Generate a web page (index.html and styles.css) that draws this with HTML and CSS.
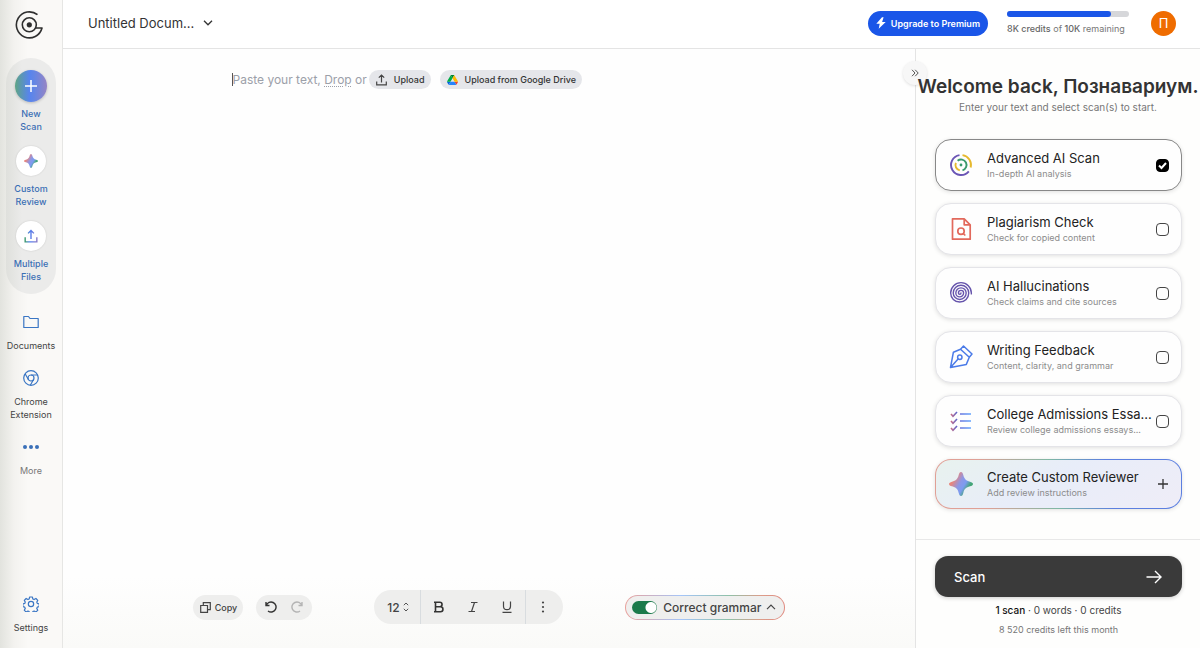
FILE: index.html
```
<!DOCTYPE html>
<html lang="en">
<head>
  <meta charset="UTF-8">
  <meta name="viewport" content="width=device-width, initial-scale=1">
  <title>Untitled Document</title>
  <link rel="stylesheet" href="styles.css">
</head>
<body>

  <!-- shared gradients for the icons -->
  <svg class="defs" width="0" height="0" aria-hidden="true">
    <defs>
      <linearGradient id="starBase" x1="0" y1="0.2" x2="1" y2="0.8">
        <stop offset="0.2" stop-color="#e8857c"/>
        <stop offset="0.45" stop-color="#8c97e6"/>
        <stop offset="0.62" stop-color="#7c9cf0"/>
        <stop offset="0.8" stop-color="#43a576"/>
      </linearGradient>
      <linearGradient id="uploadLine" gradientUnits="userSpaceOnUse" x1="2" y1="0" x2="22" y2="0">
        <stop offset="0" stop-color="#3d9a6c"/>
        <stop offset="0.4" stop-color="#4f7cf0"/>
        <stop offset="1" stop-color="#8a7cc8"/>
      </linearGradient>
      <linearGradient id="checkLine" gradientUnits="userSpaceOnUse" x1="1" y1="0" x2="9" y2="0">
        <stop offset="0" stop-color="#d9707c"/>
        <stop offset="1" stop-color="#4a63d8"/>
      </linearGradient>
      <linearGradient id="listLine" gradientUnits="userSpaceOnUse" x1="10" y1="0" x2="22" y2="0">
        <stop offset="0" stop-color="#6a6fd8"/>
        <stop offset="1" stop-color="#62a5ff"/>
      </linearGradient>
    </defs>
  </svg>

  <div class="app">
    <nav class="sidebar">
      <a class="logo" href="#home" aria-label="Home">
        <svg width="28" height="28" viewBox="0 0 28 28" fill="none" stroke="#2f2f2f" stroke-width="1.600" stroke-linejoin="round">
          <path d="M22.500 3.700A13 13 0 1 0 27 17h-6.500"/>
          <circle cx="14.300" cy="13.800" r="7"/>
          <circle cx="14.300" cy="13.800" r="2.600" fill="#2f2f2f" stroke="none"/>
        </svg>
      </a>

      <div class="nav-pill">
        <a class="nav-item" href="#new">
          <span class="circle circle-new">
            <svg width="14" height="14" viewBox="0 0 14 14" stroke="#fff" stroke-width="1.500"><path d="M7 1v12M1 7h12"/></svg>
          </span>
          New<br>Scan
        </a>
        <a class="nav-item" href="#review">
          <span class="circle">
            <svg width="14" height="14" viewBox="0 0 24 24">
              <path fill="url(#starBase)" d="M12 0c1.200 0 1.800 1.200 2.300 3 1 4 2.700 5.700 6.700 6.700 1.800.5 3 1.100 3 2.300s-1.200 1.800-3 2.300c-4 1-5.700 2.700-6.700 6.700-.5 1.800-1.100 3-2.300 3s-1.800-1.200-2.300-3c-1-4-2.700-5.700-6.700-6.700C1.200 13.800 0 13.200 0 12s1.200-1.800 3-2.300c4-1 5.700-2.700 6.700-6.700.5-1.800 1.100-3 2.300-3z"/>
            </svg>
          </span>
          Custom<br>Review
        </a>
        <a class="nav-item" href="#files">
          <span class="circle">
            <svg width="14" height="14" viewBox="0 0 24 24" fill="none" stroke="url(#uploadLine)" stroke-width="2.400"><path d="M2 14v8h20v-8M12.010 17L12 3M7 7.500L12 2.500l5 5"/></svg>
          </span>
          Multiple<br>Files
        </a>
      </div>

      <div class="nav-list">
        <a class="nav-link" href="#documents">
          <svg width="16" height="16" viewBox="0 0 16 16" fill="none" stroke="#3a76c4" stroke-width="1.200" stroke-linejoin="round"><path d="M.8 13.500V2.500h4.700l1.500 2h8.200v9z"/></svg>
          Documents
        </a>
        <a class="nav-link" href="#extension">
          <svg width="16" height="16" viewBox="0 0 16 16" fill="none" stroke="#3a76c4" stroke-width="1.200">
            <circle cx="8" cy="8" r="7.300"/><circle cx="8" cy="8" r="3"/>
            <path d="M8 5h6.500M5.400 9.500L2.100 3.800M10.600 9.500L7.300 15.200"/>
          </svg>
          Chrome<br>Extension
        </a>
        <a class="nav-link muted" href="#more">
          <svg width="16" height="16" viewBox="0 0 16 16" fill="#3a70b8"><circle cx="2" cy="8" r="2"/><circle cx="8" cy="8" r="2"/><circle cx="14" cy="8" r="2"/></svg>
          More
        </a>
      </div>

      <a class="nav-link settings" href="#settings">
        <svg width="16" height="16" viewBox="0 0 24 24" fill="none" stroke="#3a76c4" stroke-width="1.800" stroke-linejoin="round">
          <circle cx="12" cy="12" r="4"/>
          <path d="M10 1.500h4l.8 3 1.800.8 2.800-1.600 2.800 2.800-1.500 2.700.7 1.900 2.900.9v4l-2.900.8-.8 1.800 1.600 2.700-2.800 2.800-2.700-1.500-1.900.8-.8 2.900h-4l-.8-2.900-1.800-.8-2.700 1.500-2.800-2.800 1.500-2.700-.8-1.800-2.800-.8v-4l2.800-.9.800-1.900-1.500-2.700 2.800-2.800 2.700 1.600 1.800-.8z"/>
        </svg>
        Settings
      </a>
    </nav>

    <div class="page">
      <header class="topbar">
        <button class="doc-title" type="button">
          Untitled Docum...
          <svg width="10" height="6" viewBox="0 0 10 6" fill="none" stroke="#333" stroke-width="1.300"><path d="M1 .8l4 4 4-4"/></svg>
        </button>
        <div class="account">
          <button class="upgrade" type="button">
            <svg width="10" height="12" viewBox="0 0 10 12" fill="#fff"><path d="M6 .3L.3 6.800h3.400L2.700 11.700 9.700 5H6.100L7.600.3z"/></svg>
            Upgrade to Premium
          </button>
          <div class="credits">
            <div class="meter"><div class="meter-fill"></div></div>
            <span><b>8K credits</b> of <b>10K</b> remaining</span>
          </div>
          <button class="avatar" type="button">П</button>
        </div>
      </header>

      <div class="workspace">
        <main class="editor">
          <div class="prompt">
            <span class="caret"></span>
            <span class="hint">Paste your text, <a href="#drop">Drop</a> or</span>
            <button class="chip" type="button">
              <svg width="11" height="12" viewBox="0 0 11 12" fill="none" stroke="#444" stroke-width="1.200"><path d="M.7 7.500v3.400h9.600V7.500M5.500 8.500V1.200M2.800 3.700l2.700-2.700 2.700 2.700"/></svg>
              Upload
            </button>
            <button class="chip drive" type="button">
              <svg width="11" height="10" viewBox="0 0 87 78">
                <path fill="#0066da" d="M6.600 66.900l3.900 6.600c.8 1.400 2 2.500 3.300 3.300L27.500 53H0c0 1.600.4 3.100 1.200 4.500z"/>
                <path fill="#00ac47" d="M43.600 25L29.900 1.200c-1.300.8-2.500 1.900-3.300 3.300L1.200 48.500A9 9 0 0 0 0 53h27.500z"/>
                <path fill="#ea4335" d="M73.500 76.800c1.400-.8 2.500-1.900 3.300-3.300l1.600-2.700L86 57.500c.8-1.400 1.200-3 1.200-4.500H59.800l5.800 11.500z"/>
                <path fill="#00832d" d="M43.600 25L57.400 1.200C56 .4 54.500 0 52.900 0H34.400c-1.600 0-3.100.4-4.500 1.200z"/>
                <path fill="#2684fc" d="M59.800 53H27.500L13.700 76.800c1.400.8 2.900 1.200 4.500 1.200h50.900c1.600 0 3.100-.5 4.400-1.200z"/>
                <path fill="#ffba00" d="M73.400 26.500L60.700 4.500c-.8-1.400-1.900-2.500-3.300-3.300L43.600 25l16.200 28h27.400c0-1.600-.4-3.100-1.200-4.500z"/>
              </svg>
              Upload from Google Drive
            </button>
          </div>

          <div class="toolbar">
            <div class="group-left">
              <button class="pill copy" type="button">
                <svg width="11" height="11" viewBox="0 0 11 11" fill="none" stroke="#444" stroke-width="1.200"><path d="M.7 3.500h6.800v6.800H.7zM3.300 3.500V.7h7v7H7.500"/></svg>
                Copy
              </button>
              <div class="pill history">
                <button type="button" aria-label="Undo">
                  <svg width="12" height="12" viewBox="0 0 12 12" fill="none" stroke="#333" stroke-width="1.400"><path d="M1 1v3.500h3.500M1.300 4.500A5 5 0 1 1 3 10"/></svg>
                </button>
                <button type="button" aria-label="Redo">
                  <svg width="12" height="12" viewBox="0 0 12 12" fill="none" stroke="#b4b4b4" stroke-width="1.400"><path d="M11 1v3.500H7.500M10.700 4.500A5 5 0 1 0 9 10"/></svg>
                </button>
              </div>
            </div>

            <div class="format">
              <div class="size">
                <select aria-label="Font size"><option>12</option><option>14</option><option>16</option></select>
                <svg width="6" height="10" viewBox="0 0 6 10" fill="none" stroke="#555" stroke-width="1"><path d="M.8 3.200L3 1l2.200 2.200M.8 6.800L3 9l2.200-2.200"/></svg>
              </div>
              <div class="marks">
                <button type="button" aria-label="Bold">
                  <svg width="12" height="12" viewBox="0 0 12 12" fill="none" stroke="#333" stroke-width="1.600"><path d="M1 1.300h1.500v9.400H1M2.500 1.300h4.300a2.200 2.200 0 0 1 0 4.500H2.500M6.800 5.800h.7a2.400 2.400 0 0 1 0 4.900h-5"/></svg>
                </button>
                <button type="button" aria-label="Italic">
                  <svg width="12" height="12" viewBox="0 0 12 12" fill="none" stroke="#444" stroke-width="1.200"><path d="M4 1.500h6.500M1.500 10.500H8M7.500 1.500l-3 9"/></svg>
                </button>
                <button type="button" aria-label="Underline">
                  <svg width="12" height="12" viewBox="0 0 12 12" fill="none" stroke="#444" stroke-width="1.200"><path d="M2.500.5v4.700a3.500 3.500 0 0 0 7 0V.5M1.500 11.400h9"/></svg>
                </button>
              </div>
              <button class="dots" type="button" aria-label="More formatting">
                <svg width="4" height="12" viewBox="0 0 4 12" fill="#444"><circle cx="2" cy="1.500" r="1.100"/><circle cx="2" cy="6" r="1.100"/><circle cx="2" cy="10.500" r="1.100"/></svg>
              </button>
            </div>

            <div class="grammar">
              <label><input class="switch" type="checkbox" checked>Correct grammar</label>
              <button type="button" aria-label="Grammar options">
                <svg width="10" height="6" viewBox="0 0 10 6" fill="none" stroke="#444" stroke-width="1.200"><path d="M1 5.200l4-4 4 4"/></svg>
              </button>
            </div>
          </div>
        </main>

        <aside class="panel">
          <button class="collapse" type="button" aria-label="Collapse panel">
            <svg width="8" height="8" viewBox="0 0 8 8" fill="none" stroke="#555" stroke-width="1"><path d="M1 .8L4 4 1 7.200M4.200.8l3 3.200-3 3.200"/></svg>
          </button>
          <h1>Welcome back, Познавариум.</h1>
          <p class="lead">Enter your text and select scan(s) to start.</p>

          <div class="cards">
            <label class="card selected">
              <svg width="24" height="24" viewBox="0 0 24 24" fill="none" stroke-width="1.900">
                <path stroke="#6a55b5" d="M10.500 2.100A10 10 0 1 0 19.800 18.300"/>
                <path stroke="#e6b92e" d="M13.500 2.100A10 10 0 0 1 21.700 14.500"/>
                <path stroke="#e6b92e" d="M6.900 9.800A5.500 5.500 0 0 0 10.800 17.400"/>
                <path stroke="#3a9a6c" d="M8.600 7.700A5.500 5.500 0 1 1 13.500 17.300"/>
                <circle cx="12" cy="12" r="1.400" fill="#3a9a6c"/>
              </svg>
              <span class="card-text"><span class="card-title">Advanced AI Scan</span><span class="card-sub">In-depth AI analysis</span></span>
              <input type="checkbox" checked>
            </label>
            <label class="card">
              <svg width="24" height="24" viewBox="0 0 24 24" fill="none" stroke="#e2695c" stroke-width="1.700" stroke-linejoin="round">
                <path d="M3.500 1.800h11.700l6 6v14.400H3.500zM15.200 1.800v6h6"/>
                <circle cx="12" cy="14.200" r="3.200"/><path d="M14.300 16.500l2 2"/>
              </svg>
              <span class="card-text"><span class="card-title">Plagiarism Check</span><span class="card-sub">Check for copied content</span></span>
              <input type="checkbox">
            </label>
            <label class="card">
              <svg width="24" height="24" viewBox="-1 -1 26 26" fill="none" stroke="#6654ac" stroke-width="1.500" stroke-linecap="round">
                <path d="M12 12a1.400 1.400 0 0 1-2.800 0a2.800 2.800 0 0 1 5.600 0a4.200 4.200 0 0 1-8.400 0a5.600 5.600 0 0 1 11.200 0a7 7 0 0 1-14 0a8.400 8.400 0 0 1 16.800 0a9.800 9.800 0 0 1-19.600 0a11.200 11.200 0 0 1 22.400 0v1"/>
              </svg>
              <span class="card-text"><span class="card-title">AI Hallucinations</span><span class="card-sub">Check claims and cite sources</span></span>
              <input type="checkbox">
            </label>
            <label class="card">
              <svg width="24" height="24" viewBox="0 0 24 24" fill="none" stroke="#4b7be8" stroke-width="1.500" stroke-linejoin="round">
                <path d="M11.500 4.200l8.800 8-3 7.200L1.500 22.500 4.400 7.200zM11.500 4.200l3-3.200 8.500 8-2.700 3.200M1.500 22.500l7.800-8.800"/>
                <circle cx="10.800" cy="12.300" r="2.200"/>
              </svg>
              <span class="card-text"><span class="card-title">Writing Feedback</span><span class="card-sub">Content, clarity, and grammar</span></span>
              <input type="checkbox">
            </label>
            <label class="card">
              <svg width="24" height="24" viewBox="0 0 24 24" fill="none" stroke-width="1.600">
                <path stroke="url(#checkLine)" d="M2 5l2 2.300L8 3M2 12l2 2.300L8 10M2 19l2 2.300L8 17"/>
                <path stroke="url(#listLine)" d="M11 5l11 .01M11 12l11 .01M11 19l11 .01"/>
              </svg>
              <span class="card-text"><span class="card-title">College Admissions Essa...</span><span class="card-sub">Review college admissions essays...</span></span>
              <input type="checkbox">
            </label>
            <button class="card create" type="button">
              <svg width="24" height="24" viewBox="0 0 24 24">
                <path fill="url(#starBase)" d="M12 0c1.200 0 1.800 1.200 2.300 3 1 4 2.700 5.700 6.700 6.700 1.800.5 3 1.100 3 2.300s-1.200 1.800-3 2.300c-4 1-5.700 2.700-6.700 6.700-.5 1.800-1.100 3-2.300 3s-1.800-1.200-2.300-3c-1-4-2.700-5.700-6.700-6.700C1.200 13.800 0 13.200 0 12s1.200-1.800 3-2.300c4-1 5.700-2.700 6.700-6.700.5-1.800 1.100-3 2.300-3z"/>
              </svg>
              <span class="card-text"><span class="card-title">Create Custom Reviewer</span><span class="card-sub">Add review instructions</span></span>
              <svg width="12" height="12" viewBox="0 0 12 12" stroke="#333" stroke-width="1.300"><path d="M6 1v10M1 6h10"/></svg>
            </button>
          </div>

          <div class="panel-footer">
            <button class="scan" type="button">
              Scan
              <svg width="16" height="14" viewBox="0 0 16 14" fill="none" stroke="#fff" stroke-width="1.400"><path d="M.5 7h14.500M9 1l6 6-6 6"/></svg>
            </button>
            <p class="summary"><b>1 scan</b> · 0 words · 0 credits</p>
            <p class="left">8 520 credits left this month</p>
          </div>
        </aside>
      </div>
    </div>
  </div>

</body>
</html>
```
FILE: styles.css
```
* {
  box-sizing: border-box;
}

body {
  margin: 0;
  font-family: Inter, sans-serif;
  font-size: 13px;
  color: #333;
  background: #fff;
}

a {
  color: inherit;
  text-decoration: none;
}

button {
  margin: 0;
  padding: 0;
  border: none;
  background: none;
  font: inherit;
  color: inherit;
  cursor: pointer;
}

svg {
  display: block;
  flex: none;
}

.defs {
  position: absolute;
}

.app {
  display: flex;
  min-height: 100vh;
}

/* Sidebar */
.sidebar {
  flex: none;
  width: 63px;
  display: flex;
  flex-direction: column;
  align-items: center;
  padding: 11px 0 14px;
  border-right: 1px solid #e6e6e4;
  background: linear-gradient(to right, #e2e3de, #f3f2ef 14px, #faf9f7 28px);
}

.logo {
  align-self: flex-start;
  margin-left: 15px;
}

.nav-pill {
  display: flex;
  flex-direction: column;
  gap: 12px;
  width: 50px;
  margin-top: 19px;
  padding: 12px 0 11px;
  border-radius: 25px;
  background: linear-gradient(to right, #dfe0dc, #ebebea 16px);
}

.nav-item,
.nav-link {
  display: flex;
  flex-direction: column;
  align-items: center;
  font-size: 9px;
  line-height: 13px;
  text-align: center;
}

.nav-item {
  color: #3b6fb5;
  font-weight: 500;
}

.circle {
  display: flex;
  align-items: center;
  justify-content: center;
  width: 30px;
  height: 30px;
  margin: 1px 0 6px;
  border-radius: 50%;
  background: #fff;
  box-shadow: 0 0 2px rgba(0, 0, 0, 0.15);
}

.circle-new {
  width: 32px;
  height: 32px;
  margin: 0 0 5px;
  background: linear-gradient(to right, #5fa585, #5784ee 45%, #6486e4 60%, #9684c4);
  box-shadow: 0 1px 3px rgba(0, 0, 0, 0.2);
}

.nav-list {
  display: flex;
  flex-direction: column;
  gap: 18px;
  margin-top: 20px;
}

.nav-link {
  color: #444;
}

.nav-link svg {
  margin-bottom: 9px;
}

.muted {
  color: #777;
}

.settings {
  margin-top: auto;
}

/* Top bar */
.page {
  flex: 1;
  min-width: 0;
  display: flex;
  flex-direction: column;
}

.topbar {
  display: flex;
  align-items: center;
  justify-content: space-between;
  height: 49px;
  padding: 0 24px 2px 25px;
  border-bottom: 1px solid #e4e4e4;
}

.doc-title {
  display: flex;
  align-items: center;
  gap: 9px;
  font-size: 13px;
}

.account {
  display: flex;
  align-items: center;
}

.upgrade {
  display: flex;
  align-items: center;
  gap: 5px;
  height: 25px;
  padding: 0 8px;
  border-radius: 13px;
  background: #1a56e8;
  color: #fff;
  font-size: 9px;
  font-weight: 600;
}

.credits {
  width: 122px;
  margin: 0 22px 0 19px;
  font-size: 9px;
  line-height: 14px;
  color: #777;
}

.credits b {
  font-weight: 500;
  color: #666;
}

.meter {
  height: 6px;
  margin-bottom: 5px;
  border-radius: 3px;
  background: #d6d7da;
}

.meter-fill {
  width: 85%;
  height: 100%;
  border-radius: 3px;
  background: #1a56e8;
}

.avatar {
  width: 25px;
  height: 25px;
  border-radius: 50%;
  background: #ef6c00;
  color: #fff;
}

/* Editor */
.workspace {
  flex: 1;
  display: flex;
}

.editor {
  flex: 1;
  min-width: 0;
  display: flex;
  flex-direction: column;
  align-items: center;
  justify-content: space-between;
  padding: 21px 0 24px;
  background: linear-gradient(#fefefe 88%, #fafaf8);
}

.prompt {
  display: flex;
  align-items: center;
  width: 100%;
  max-width: 515px;
}

.caret {
  width: 1px;
  height: 13px;
  background: #555;
}

.hint {
  font-size: 12px;
  color: #9ca0a9;
}

.hint a {
  text-decoration: underline dotted;
  text-underline-offset: 2px;
}

.chip {
  display: flex;
  align-items: center;
  gap: 7px;
  height: 19px;
  margin-left: 2px;
  padding: 0 6px 0 7px;
  border-radius: 10px;
  background: #e5e6ea;
  font-size: 9px;
  font-weight: 500;
  color: #333;
}

.drive {
  margin-left: 9px;
}

.toolbar {
  display: flex;
  align-items: center;
  gap: 62px;
  color: #444;
}

.group-left {
  display: flex;
  gap: 13px;
}

.pill {
  display: flex;
  align-items: center;
  height: 25px;
  border-radius: 13px;
  background: #eeeeed;
}

.copy {
  gap: 4px;
  padding: 0 6px 0 7px;
  font-size: 9px;
  font-weight: 500;
}

.history {
  gap: 14px;
  padding: 0 9px;
}

.format {
  display: flex;
  height: 34px;
  border-radius: 17px;
  background: #eeeeed;
}

.size {
  display: flex;
  align-items: center;
  gap: 3px;
  padding: 0 11px 0 13px;
}

.size select {
  appearance: none;
  border: none;
  padding: 0;
  background: none;
  font: 500 12px Inter, sans-serif;
  color: #444;
}

.marks {
  display: flex;
  align-items: center;
  gap: 22px;
  padding: 0 12px;
  border: solid #d8dcdf;
  border-width: 0 1px;
}

.dots {
  display: flex;
  align-items: center;
  padding: 0 18px 0 15px;
}

.grammar {
  display: flex;
  align-items: center;
  gap: 5px;
  height: 25px;
  padding: 0 8px 0 6px;
  border: 1px solid transparent;
  border-radius: 13px;
  background: linear-gradient(#efefee, #efefee) padding-box,
    linear-gradient(to right, #e9a09a, #a5c5f8 35%, #8fc0a8 65%, #dc9d8a 85%, #e08a80) border-box;
}

.grammar label {
  display: flex;
  align-items: center;
  gap: 6px;
  font-size: 12px;
  font-weight: 500;
}

.switch {
  appearance: none;
  width: 25px;
  height: 13px;
  margin: 0;
  border-radius: 7px;
  background: radial-gradient(circle at 19px 50%, #fff 5px, #1c7a4b 6px);
}

/* Scan panel */
.panel {
  position: relative;
  flex: none;
  width: 285px;
  display: flex;
  flex-direction: column;
  padding-top: 26px;
  border-left: 1px solid #e4e4e4;
  background: #fefefd;
}

.collapse {
  position: absolute;
  top: 12px;
  left: -13px;
  display: flex;
  align-items: center;
  justify-content: center;
  width: 24px;
  height: 24px;
  border-radius: 50%;
  background: #f7f7f7;
  box-shadow: 0 1px 3px rgba(0, 0, 0, 0.12);
}

h1 {
  position: relative;
  margin: 0;
  font-size: 19px;
  font-weight: 600;
  line-height: 24px;
  text-align: center;
  white-space: nowrap;
}

.lead {
  margin: 0;
  font-size: 10px;
  line-height: 16px;
  color: #777;
  text-align: center;
}

.cards {
  display: flex;
  flex-direction: column;
  gap: 12px;
  padding: 24px 18px 28px 19px;
}

.card {
  display: flex;
  align-items: center;
  height: 52px;
  padding: 0 12px 0 13px;
  border: 1px solid #e4e4e8;
  border-radius: 16px;
  background: #fefefe;
  box-shadow: 0 1px 4px rgba(0, 0, 0, 0.12);
  text-align: left;
  cursor: pointer;
}

.selected {
  border-color: #888;
}

.card-text {
  flex: 1;
  min-width: 0;
  display: flex;
  flex-direction: column;
  padding-left: 14px;
  white-space: nowrap;
}

.card-title {
  font-size: 13px;
  line-height: 17px;
  color: #222;
}

.card-sub {
  font-size: 9px;
  line-height: 14px;
  color: #8c8c8c;
}

.card input {
  appearance: none;
  flex: none;
  width: 13px;
  height: 13px;
  margin: 0;
  border: 1px solid #444;
  border-radius: 4px;
}

.card input:checked {
  border-color: #000;
  background: #000 url("data:image/svg+xml,%3Csvg xmlns='http://www.w3.org/2000/svg' viewBox='0 0 11 11'%3E%3Cpath d='M2 5.500l2.500 2.500L9 3' fill='none' stroke='white' stroke-width='2'/%3E%3C/svg%3E") center / 11px;
}

.create {
  height: 50px;
  border-color: transparent;
  background: linear-gradient(150deg, #e8f2ee, #e8edf9 45%, #efedf7) padding-box,
    linear-gradient(80deg, #e0a096 20%, #7fb8a4 48%, #5c7fe0 70%) border-box;
}

.panel-footer {
  margin-top: auto;
  padding: 16px 18px 8px 19px;
  border-top: 1px solid #e8e8e8;
  text-align: center;
}

.scan {
  display: flex;
  align-items: center;
  justify-content: space-between;
  width: 100%;
  height: 41px;
  padding: 0 20px 0 19px;
  border-radius: 13px;
  background: #3a3a3a;
  box-shadow: 0 1px 4px rgba(0, 0, 0, 0.2);
  color: #fff;
  font-weight: 500;
}

.panel-footer p {
  margin: 0;
  font-size: 10px;
  line-height: 20px;
}

.panel-footer .summary {
  margin-top: 3px;
  color: #444;
}

.summary b {
  font-weight: 500;
  color: #111;
}

.panel-footer .left {
  font-size: 9px;
  color: #777;
}
```
